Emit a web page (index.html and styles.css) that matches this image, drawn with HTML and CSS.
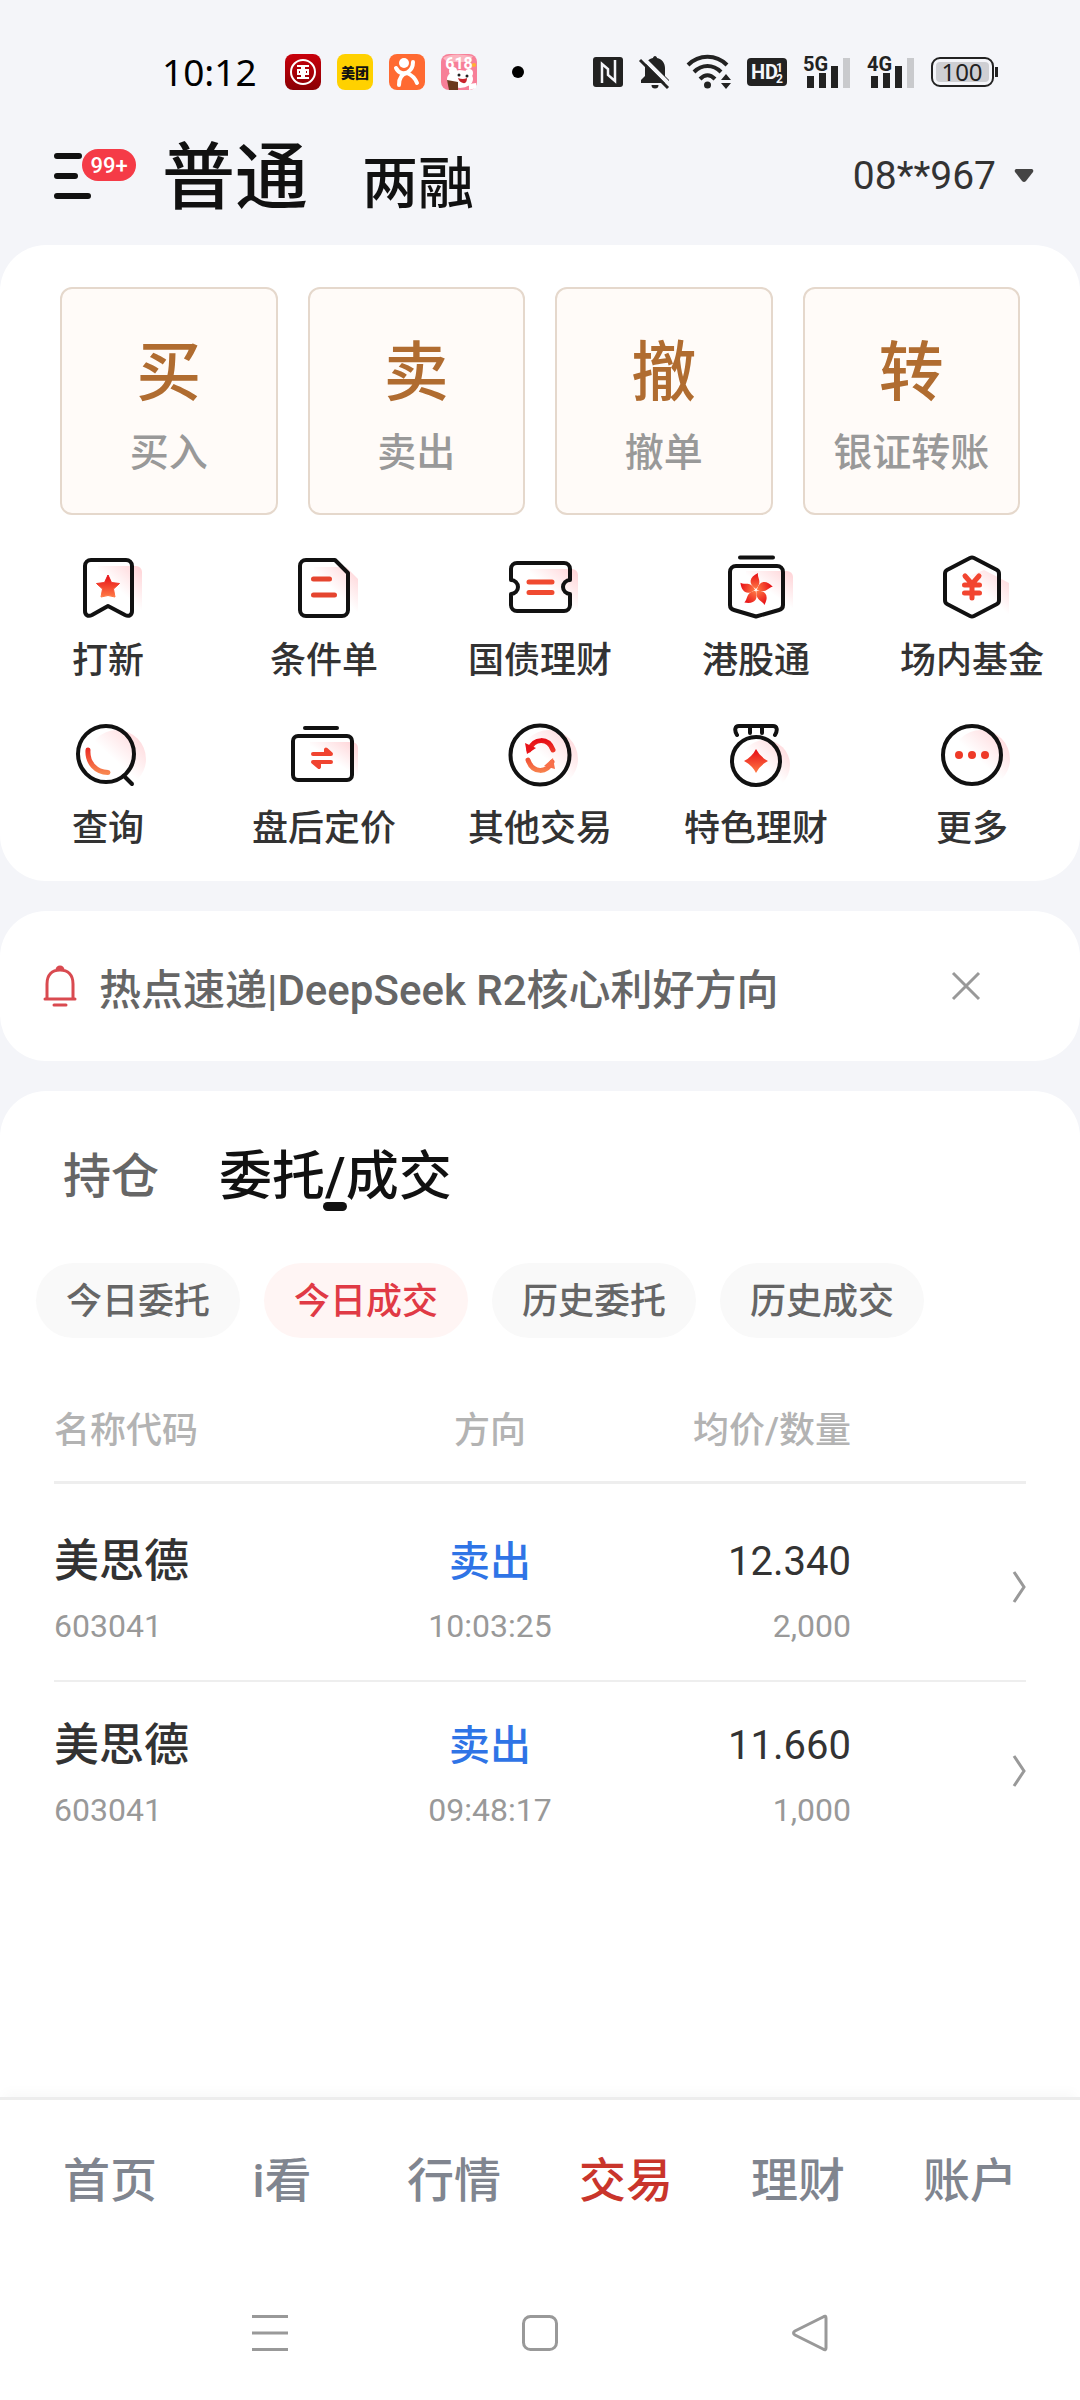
FILE: index.html
```html
<!DOCTYPE html>
<html lang="zh-CN">
<head>
<meta charset="utf-8">
<meta name="viewport" content="width=device-width, initial-scale=1">
<title>交易</title>
<link rel="stylesheet" href="styles.css">
</head>
<body>
<svg class="defs" aria-hidden="true">
  <defs>
    <linearGradient id="hot" x1="0" y1="0" x2="0" y2="1"><stop offset="0" stop-color="#e60a14"/><stop offset="1" stop-color="#ff7a45"/></linearGradient>
    <linearGradient id="warm" x1="0" y1="0" x2="0" y2="1"><stop offset="0" stop-color="#f03426"/><stop offset="1" stop-color="#f8603a"/></linearGradient>
    <linearGradient id="arc" gradientUnits="userSpaceOnUse" x1="0" y1="16" x2="0" y2="50"><stop offset="0" stop-color="#e60a14"/><stop offset="1" stop-color="#f8854f"/></linearGradient>
    <linearGradient id="glow" x1="1" y1="0.1" x2="0.55" y2="0.6"><stop offset="0" stop-color="#ff3040" stop-opacity=".2"/><stop offset="1" stop-color="#ff3040" stop-opacity="0"/></linearGradient>
    <linearGradient id="bank" x1="0" y1="0" x2="0" y2="1"><stop offset="0" stop-color="#c8000c"/><stop offset="1" stop-color="#8a0004"/></linearGradient>
  </defs>
</svg>

<div class="status">
  <time class="clock">10:12</time>
  <div class="apps">
    <svg width="36" height="36" viewBox="0 0 36 36"><rect width="36" height="36" rx="8" fill="url(#bank)"/><circle cx="18" cy="18" r="12" fill="none" stroke="#fff" stroke-width="2"/><path d="M12 12h5v4h-4v4h4v4h-5M24 12h-5v4h4v4h-4v4h5M15 18h6" fill="none" stroke="#fff" stroke-width="2"/></svg>
    <svg width="36" height="36" viewBox="0 0 36 36"><rect width="36" height="36" rx="8" fill="#ffd100"/><text class="logo" x="18" y="24" text-anchor="middle">美团</text></svg>
    <svg width="36" height="36" viewBox="0 0 36 36"><rect width="36" height="36" rx="8" fill="#ff6a32"/><circle cx="15" cy="9" r="5" fill="#fff"/><path d="M7 14c3 6 8 6 12 4 3-2 5-5 5-10M10 31c0-7 3-11 8-12 5 2 8 5 10 10" fill="none" stroke="#fff" stroke-width="4" stroke-linecap="round"/></svg>
    <svg width="36" height="36" viewBox="0 0 36 36"><rect width="36" height="36" rx="8" fill="#f77f98"/><path d="M2 4q8-6 30-2l-4 6H6z" fill="#fbb4bf"/><circle cx="33" cy="11" r="2" fill="#ffb32c"/><ellipse cx="19" cy="25" rx="13" ry="9" fill="#fff"/><circle cx="12" cy="17" r="4" fill="#fff"/><circle cx="28" cy="19" r="4" fill="#fff"/><circle cx="18" cy="21" r="1.500" fill="#222"/><circle cx="26" cy="22" r="1.500" fill="#222"/><path d="M17 24q5 2 9 0 0 6-4 5-4-1-5-5z" fill="#c8242c"/><path d="M6 26l11 2v8H8z" fill="#6b3a1e"/><path d="M28 30l7-1v5l-7 2z" fill="#fff"/><text class="promo" x="18" y="15" text-anchor="middle">618</text></svg>
  </div>
  <span class="dot"></span>
  <div class="signals">
    <svg width="30" height="30" viewBox="0 0 30 30"><rect width="30" height="30" rx="3" fill="#222"/><path d="M9 26V7l6 5v6l7 6V3" fill="none" stroke="#f4f5f9" stroke-width="2.500"/></svg>
    <svg width="32" height="34" viewBox="0 0 32 34"><path d="M16 1c1 0 2 1 2 2 5 1 8 5 8 10v8l4 4v3H2v-3l4-4v-8c0-5 3-9 8-10 0-1 1-2 2-2z" fill="#222"/><path d="M12.500 30h7a3.500 3.500 0 0 1-7 0z" fill="#222"/><path d="M3 2l28 28" stroke="#f4f5f9" stroke-width="4"/><path d="M1 5l28 28" stroke="#222" stroke-width="3"/></svg>
    <svg width="44" height="34" viewBox="0 0 44 34"><path d="M1 10c11-11 28-11 39 0M7 17c8-8 19-8 27 0M13 24c5-5 10-5 15 0" fill="none" stroke="#222" stroke-width="4"/><circle cx="20.500" cy="30" r="3.500" fill="#222"/><path d="M39 19l5 6H34zM39 34l5-6H34z" fill="#222"/></svg>
    <svg width="40" height="28" viewBox="0 0 40 28"><rect width="40" height="28" rx="4" fill="#222"/><text class="hd" x="4" y="21">HD</text><text class="hd-sub" x="29" y="14">1</text><text class="hd-sub" x="29" y="25">2</text></svg>
    <svg width="48" height="34" viewBox="0 0 48 34"><text class="gen" x="0" y="16">5G</text><path d="M4 21h7v12H4zM16 18h7v15h-7zM28 11h7v22h-7z" fill="#222"/><path d="M40 3h7v30h-7z" fill="#c9cacd"/></svg>
    <svg width="48" height="34" viewBox="0 0 48 34"><text class="gen" x="0" y="16">4G</text><path d="M4 21h7v12H4zM16 18h7v15h-7zM28 11h7v22h-7z" fill="#222"/><path d="M40 3h7v30h-7z" fill="#c9cacd"/></svg>
    <svg width="68" height="30" viewBox="0 0 68 30"><rect x="1" y="1" width="61" height="28" rx="8" fill="none" stroke="#222" stroke-width="2"/><rect x="5" y="5" width="53" height="20" rx="4" fill="#cecfd3"/><path d="M65.500 10v10" stroke="#222" stroke-width="3"/><text class="battery" x="31" y="24" text-anchor="middle">100</text></svg>
  </div>
</div>

<header class="header">
  <button class="menu" type="button" aria-label="菜单">
    <svg width="40" height="46" viewBox="0 0 40 46"><path d="M3 3h22M3 23h18M3 43h31" stroke="#111" stroke-width="6" stroke-linecap="round"/></svg>
    <span class="badge">99+</span>
  </button>
  <nav class="modes">
    <a class="mode mode-on" href="#">普通</a>
    <a class="mode" href="#">两融</a>
  </nav>
  <button class="account" type="button">08**967
    <svg width="20" height="16" viewBox="0 0 20 16"><path d="M2 1h16q2 1 1 3l-7 9q-2 2-4 0L1 4Q0 2 2 1z" fill="#444"/></svg>
  </button>
</header>

<main>
  <section class="card trade">
    <div class="actions">
      <button class="action" type="button"><span class="glyph">买</span><span class="caption">买入</span></button>
      <button class="action" type="button"><span class="glyph">卖</span><span class="caption">卖出</span></button>
      <button class="action" type="button"><span class="glyph">撤</span><span class="caption">撤单</span></button>
      <button class="action" type="button"><span class="glyph">转</span><span class="caption">银证转账</span></button>
    </div>
    <div class="tools">
      <a class="tool" href="#">
        <svg class="icon" viewBox="0 0 72 66"><path d="M26 11H64a6 6 0 0 1 6 6V56L26 40z" fill="url(#glow)"/><path class="line" d="M19 5H54a6 6 0 0 1 6 6V56c0 4-3 6-7 4L36 51 20 60c-4 2-7 0-7-4V11a6 6 0 0 1 6-6z"/><path d="M36 20l3.500 7.500 8 1-6 5.500 1.500 8q-7-3-14 0l1.500-8-6-5.500 8-1z" fill="url(#hot)" stroke="url(#hot)" stroke-linejoin="round"/></svg>
        打新</a>
      <a class="tool" href="#">
        <svg class="icon" viewBox="0 0 72 66"><path d="M26 12H58L70 24V58L26 44z" fill="url(#glow)"/><path class="line" d="M18 5H47L60 18V55a6 6 0 0 1-6 6H18a6 6 0 0 1-6-6V11a6 6 0 0 1 6-6z"/><path d="M25.500 24h16M25.500 40h21" stroke="#e5452f" stroke-width="5" stroke-linecap="round"/></svg>
        条件单</a>
      <a class="tool" href="#">
        <svg class="icon" viewBox="0 0 72 66"><path d="M26 14H68a6 6 0 0 1 6 6V56L26 44z" fill="url(#glow)"/><path class="line" d="M13 8H60a6 6 0 0 1 6 6V25a7 7 0 0 0 0 14V50a6 6 0 0 1-6 6H13a6 6 0 0 1-6-6V39a7 7 0 0 0 0-14V14a6 6 0 0 1 6-6z"/><path d="M25 27h23M25 37.500h23" stroke="#f04a30" stroke-width="5" stroke-linecap="round"/></svg>
        国债理财</a>
      <a class="tool" href="#">
        <svg class="icon" viewBox="0 0 72 66"><path d="M26 16H67a6 6 0 0 1 6 6V54L26 46z" fill="url(#glow)"/><path class="line" d="M20 2.500H53M16 11H57a6 6 0 0 1 6 6V50q0 4-4 5L36 61.500 14 55q-4-1-4-5V17a6 6 0 0 1 6-6z"/>
          <g transform="translate(36 35)" fill="url(#hot)"><path id="petal" d="M0-1C-8-6-7-13 2-17 1-12 7-8 0-1z"/><use href="#petal" transform="rotate(72)"/><use href="#petal" transform="rotate(144)"/><use href="#petal" transform="rotate(216)"/><use href="#petal" transform="rotate(288)"/></g></svg>
        港股通</a>
      <a class="tool" href="#">
        <svg class="icon" viewBox="0 0 72 66"><path d="M26 24L48 15 73 28V60L26 44z" fill="url(#glow)"/><path class="line" d="M34 3q2-1 4 0L61 15q2 1 2 4V45q0 3-2 4L38 61q-2 1-4 0L11 49q-2-1-2-4V19q0-3 2-4z"/><path d="M29 21l7 8 7-8M28.500 30h15M28.500 38h15M36 29v14" fill="none" stroke="#f24530" stroke-width="5" stroke-linecap="round"/></svg>
        场内基金</a>
      <a class="tool" href="#">
        <svg class="icon" viewBox="0 0 72 66"><circle cx="45" cy="36" r="29" fill="url(#glow)"/><circle class="line" cx="34" cy="31" r="28"/><path class="line" d="M52 53l8 8"/><path d="M16 27c-1 13 8 22 20 22.500" fill="none" stroke="url(#arc)" stroke-width="5" stroke-linecap="round"/></svg>
        查询</a>
      <a class="tool" href="#">
        <svg class="icon" viewBox="0 0 72 66"><path d="M22 19H64a6 6 0 0 1 6 6V54L22 46z" fill="url(#glow)"/><path class="line" d="M17 5H49"/><rect class="line" x="5" y="13" width="59" height="44" rx="5"/><path d="M25 31H43L38 26.500V31M43 39H25L31 44V39" fill="#f04430" stroke="#f04430" stroke-width="4" stroke-linecap="round" stroke-linejoin="round"/></svg>
        盘后定价</a>
      <a class="tool" href="#">
        <svg class="icon" viewBox="0 0 72 66"><circle cx="45" cy="36" r="29" fill="url(#glow)"/><circle class="line" cx="36" cy="32" r="29.500"/><path d="M25 27C30 15 44 14 49 27M24 37C29 51 43 50 48 39" fill="none" stroke="url(#arc)" stroke-width="5" stroke-linecap="round"/><path d="M21 20l2 11 9-6z" fill="#e8141a"/><path d="M51 46l-2-11-9 8z" fill="#f8704a"/></svg>
        其他交易</a>
      <a class="tool" href="#">
        <svg class="icon" viewBox="0 0 72 66"><circle cx="45" cy="42" r="25" fill="url(#glow)"/><circle class="line" cx="36" cy="38" r="24"/><path class="line" d="M17 12c-3-5-2-9 2-9H53c4 0 5 4 2 9M30 3v7M42 3v7"/><path d="M36 26q4 8 12 12-8 4-12 12-4-8-12-12 8-4 12-12z" fill="url(#hot)"/></svg>
        特色理财</a>
      <a class="tool" href="#">
        <svg class="icon" viewBox="0 0 72 66"><circle cx="45" cy="36" r="29" fill="url(#glow)"/><circle class="line" cx="36" cy="32" r="29"/><g fill="#ee3a28"><circle cx="23" cy="32" r="4"/><circle cx="36" cy="32" r="4"/><circle cx="49" cy="32" r="4"/></g></svg>
        更多</a>
    </div>
  </section>

  <section class="card notice">
    <svg width="34" height="42" viewBox="0 0 34 42"><path d="M4 34V19C4 10 9 5 17 5s13 5 13 14v15M14 5a3 3 0 1 1 6 0" fill="none" stroke="#d94a50" stroke-width="3"/><path d="M2 34h30M11 40h12" stroke="#d94a50" stroke-width="3" stroke-linecap="round"/></svg>
    <a class="headline" href="#">热点速递|DeepSeek R2核心利好方向</a>
    <button class="close" type="button" aria-label="关闭"><svg width="28" height="28" viewBox="0 0 28 28"><path d="M1 1l26 26M27 1L1 27" stroke="#999" stroke-width="3"/></svg></button>
  </section>

  <section class="card orders">
    <nav class="tabs">
      <a class="tab" href="#">持仓</a>
      <a class="tab tab-on" href="#">委托/成交</a>
    </nav>
    <div class="chips">
      <button class="chip" type="button">今日委托</button>
      <button class="chip chip-on" type="button">今日成交</button>
      <button class="chip" type="button">历史委托</button>
      <button class="chip" type="button">历史成交</button>
    </div>
    <table class="deals">
      <thead>
        <tr><th class="name">名称代码</th><th class="side">方向</th><th class="price">均价/数量</th><th class="more"></th></tr>
      </thead>
      <tbody>
        <tr>
          <td class="name"><span class="main">美思德</span><span class="sub">603041</span></td>
          <td class="side"><span class="main sell">卖出</span><span class="sub">10:03:25</span></td>
          <td class="price"><span class="main">12.340</span><span class="sub">2,000</span></td>
          <td class="more"><a href="#" aria-label="详情"><svg width="14" height="32" viewBox="0 0 14 32"><path d="M2 1l10 15L2 31" fill="none" stroke="#999" stroke-width="3"/></svg></a></td>
        </tr>
        <tr>
          <td class="name"><span class="main">美思德</span><span class="sub">603041</span></td>
          <td class="side"><span class="main sell">卖出</span><span class="sub">09:48:17</span></td>
          <td class="price"><span class="main">11.660</span><span class="sub">1,000</span></td>
          <td class="more"><a href="#" aria-label="详情"><svg width="14" height="32" viewBox="0 0 14 32"><path d="M2 1l10 15L2 31" fill="none" stroke="#999" stroke-width="3"/></svg></a></td>
        </tr>
      </tbody>
    </table>
  </section>
</main>

<footer>
  <nav class="bottom">
    <a href="#">首页</a><a href="#">i看</a><a href="#">行情</a><a class="on" href="#">交易</a><a href="#">理财</a><a href="#">账户</a>
  </nav>
  <div class="system">
    <button type="button" aria-label="最近任务"><svg width="36" height="36" viewBox="0 0 36 36"><path d="M0 1.500h36M0 18h36M0 34.500h36" stroke="#999" stroke-width="3"/></svg></button>
    <button type="button" aria-label="主屏幕"><svg width="36" height="36" viewBox="0 0 36 36"><rect x="1.500" y="1.500" width="33" height="33" rx="7" fill="none" stroke="#999" stroke-width="3"/></svg></button>
    <button type="button" aria-label="返回"><svg width="36" height="36" viewBox="0 0 36 36"><path d="M31 2q3-2 3 1V33q0 3-3 1L3 20q-3-2 0-4z" fill="none" stroke="#999" stroke-width="3"/></svg></button>
  </div>
</footer>
</body>
</html>
```
FILE: styles.css
```css
* { box-sizing: border-box; }

body {
  margin: 0;
  min-height: 100vh;
  display: flex;
  flex-direction: column;
  background: #f4f5f9;
  color: #333;
  font-family: Roboto, "Noto Sans CJK SC", sans-serif;
  font-weight: 500;
}

a { color: inherit; text-decoration: none; }
button { font: inherit; color: inherit; background: none; border: 0; padding: 0; }
svg { display: block; overflow: visible; flex: none; }
.defs { width: 0; height: 0; position: absolute; }

/* Status bar */
.status {
  display: flex;
  align-items: center;
  height: 90px;
  padding: 54px 81px 0 162px;
}
.clock { width: 123px; font: 400 37px/36px "Noto Sans", sans-serif; color: #000; }
.apps { display: flex; gap: 16px; }
.dot { width: 12px; height: 12px; margin-left: 35px; border-radius: 50%; background: #000; }
.signals { display: flex; align-items: center; gap: 16px; margin-left: auto; }
.logo { font: 900 14px "Noto Sans CJK SC", sans-serif; fill: #111; }
.promo { font: 700 16px Roboto, sans-serif; fill: #fff; }
.hd { font: 700 20px "Liberation Sans Narrow", Roboto, sans-serif; fill: #f4f5f9; }
.hd-sub { font: 700 12px Roboto, sans-serif; fill: #f4f5f9; }
.gen { font: 700 20px "Liberation Sans Narrow", Roboto, sans-serif; fill: #222; }
.battery { font: 400 24px "Noto Sans", sans-serif; fill: #222; }

/* Header */
.header { display: flex; align-items: center; padding: 33px 46px 16px 54px; }
.menu { position: relative; width: 108px; }
.badge {
  position: absolute;
  left: 28px;
  top: -4px;
  width: 54px;
  height: 32px;
  border-radius: 16px;
  background: #f53b47;
  color: #fff;
  font-size: 22px;
  line-height: 33px;
}
.modes {
  display: flex;
  align-items: baseline;
  gap: 54px;
  flex: 1;
  height: 106px;
  padding-top: 10px;
  color: #111;
  line-height: 90px;
}
.mode { font-size: 56px; }
.mode-on { font-size: 73px; }
.account { display: flex; align-items: center; gap: 18px; font-size: 39px; font-weight: 400; }

/* Cards */
.card { background: #fff; border-radius: 46px; }

.trade { padding: 42px 0 28px; margin-bottom: 30px; }
.actions { display: grid; grid-template-columns: repeat(4, 1fr); gap: 30px; padding: 0 60px; }
.action {
  display: flex;
  flex-direction: column;
  align-items: center;
  height: 228px;
  padding-top: 44px;
  border: 2px solid #e5d8cc;
  border-radius: 12px;
  background: #fffbf8;
}
.glyph { font-size: 65px; line-height: 80px; color: #b06c30; }
.caption { font-size: 39px; line-height: 80px; color: #999; }

.tools { display: grid; grid-template-columns: repeat(5, 1fr); row-gap: 38px; padding-top: 40px; }
.tool {
  display: flex;
  flex-direction: column;
  align-items: center;
  font-size: 36px;
  line-height: 48px;
  gap: 16px;
  white-space: nowrap;
}
.icon { width: 72px; height: 66px; }
.line { fill: none; stroke: #111; stroke-width: 4; stroke-linecap: round; stroke-linejoin: round; }

.notice { display: flex; align-items: center; height: 150px; padding: 0 100px 0 43px; margin-bottom: 30px; }
.headline { flex: 1; margin-left: 22px; font-size: 42px; color: #666; }

/* Orders */
main { flex: 1; display: flex; flex-direction: column; }
.orders { flex: 1; padding-bottom: 60px; border-radius: 46px 46px 0 0; }
.tabs { display: flex; align-items: center; gap: 60px; padding: 46px 63px 0; line-height: 80px; }
.tab { font-size: 48px; color: #666; }
.tab-on { position: relative; font-size: 53px; color: #111; }
.tab-on::after {
  content: "";
  position: absolute;
  left: calc(50% - 12px);
  bottom: 6px;
  width: 24px;
  height: 9px;
  border-radius: 5px;
  background: #111;
}
.chips { display: flex; gap: 24px; padding: 46px 36px 0; }
.chip { padding: 3px 30px 0; border-radius: 38px; background: #f9f9f9; color: #666; font-size: 36px; line-height: 72px; }
.chip-on { background: #fff5f4; color: #e03a45; }

.deals { width: calc(100% - 108px); margin: 48px 54px 0; border-collapse: collapse; table-layout: fixed; }
.deals th { padding: 0 0 12px; height: 96px; border-bottom: 3px solid #eee; font-size: 36px; font-weight: 500; color: #b3b3b3; }
.deals td { padding: 32px 0 22px; vertical-align: middle; }
.deals tbody::before { content: ""; display: block; height: 14px; }
.deals tbody tr + tr td { border-top: 2px solid #eee; }
.deals .name { width: 32.5%; text-align: left; }
.deals .side { width: 24.7%; text-align: center; }
.deals .price { width: 24.8%; text-align: right; }
.deals .more { width: 18%; }
.deals td.more { padding-bottom: 36px; }
.more svg { margin-left: auto; }
.main { display: block; font-size: 41px; line-height: 64px; }
.name .main { font-size: 45px; }
.price .main { font-size: 40px; font-weight: 400; }
.sell { color: #2f74e6; }
.sub { display: block; font-size: 32px; line-height: 64px; font-weight: 400; color: #999; }

/* Bottom bars */
footer { background: #fff; }
.bottom {
  display: grid;
  grid-template-columns: repeat(6, 1fr);
  padding: 41px 24px 0;
  border-top: 3px solid #ededed;
  box-shadow: 0 -8px 12px -4px rgba(0, 0, 0, .03);
  text-align: center;
  font-size: 47px;
  line-height: 80px;
  color: #80858f;
}
.bottom .on { color: #c9352b; }
.system { display: grid; grid-template-columns: repeat(3, 1fr); padding: 94px 135px 49px; justify-items: center; }
```
